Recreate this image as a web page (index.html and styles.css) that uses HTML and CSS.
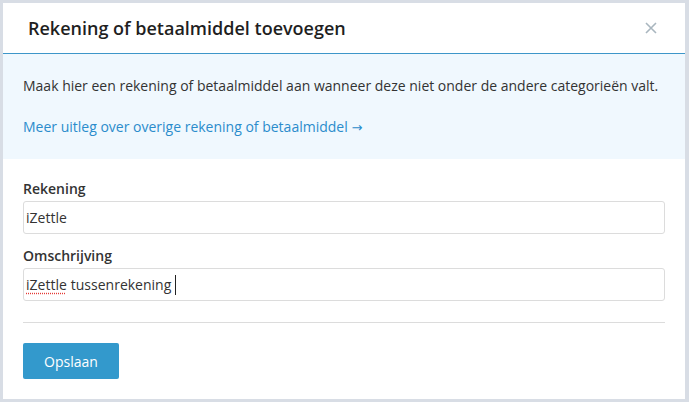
FILE: index.html
```html
<!DOCTYPE html>
<html>
<head>
<meta charset="utf-8">
<link rel="stylesheet" href="styles.css">
</head>
<body>
<div class="dialog">
  <div class="header">
    <h1 class="title">Rekening of betaalmiddel toevoegen</h1>
    <span class="close">
      <svg width="12" height="12" viewBox="0 0 12 12"><path d="M1 1L11 11M11 1L1 11" stroke="#a9b6bf" stroke-width="1.6" fill="none"/></svg>
    </span>
  </div>
  <div class="info">
    <p class="info-text">Maak hier een rekening of betaalmiddel aan wanneer deze niet onder de andere categorieën valt.</p>
    <a class="info-link">Meer uitleg over overige rekening of betaalmiddel <span class="arrow">→</span></a>
  </div>
  <div class="form">
    <label class="label">Rekening</label>
    <div class="input">iZettle</div>
    <label class="label">Omschrijving</label>
    <div class="input"><span class="spell">iZettle</span> tussenrekening<span class="caret"></span></div>
    <hr class="rule">
    <button class="btn">Opslaan</button>
  </div>
</div>
</body>
</html>
```
FILE: styles.css
```css
html, body {
  margin: 0;
  padding: 0;
  background: #d8dde5;
  font-family: "Open Sans", "Noto Sans", sans-serif;
}
body {
  padding: 3px 4px 3px 3px;
  height: 402px;
  box-sizing: border-box;
}
.dialog {
  background: #fff;
  height: 396px;
  display: flex;
  flex-direction: column;
}
.header {
  height: 50px;
  border-bottom: 1px solid #3d96c9;
  display: flex;
  align-items: center;
  justify-content: space-between;
  padding: 0 28px 0 25px;
}
.title {
  margin: 0;
  font-size: 18px;
  font-weight: 600;
  color: #1f1f1f;
  letter-spacing: 0;
}
.close {
  display: flex;
  align-items: center;
}
.info {
  background: #f0f8fe;
  padding: 21px 20px 0;
  height: 84px;
}
.info-text {
  margin: 0;
  font-size: 14px;
  color: #333;
  line-height: 22px;
}
.info-link {
  display: block;
  margin-top: 19px;
  font-size: 14px;
  line-height: 22px;
  color: #2b8ccc;
}
.arrow {
  font-family: "DejaVu Sans", sans-serif;
  font-size: 13px;
}
.form {
  padding: 20px 20px 0;
  display: flex;
  flex-direction: column;
}
.label {
  font-size: 14px;
  font-weight: 600;
  color: #333;
  line-height: 20px;
  margin-bottom: 2px;
}
.input {
  height: 31px;
  border: 1px solid #dcdcdc;
  border-radius: 3px;
  font-size: 14px;
  color: #333;
  line-height: 31px;
  padding: 0 2px;
  margin-bottom: 12px;
  display: flex;
  align-items: center;
}
.spell {
  text-decoration: underline dotted #e53935;
  text-underline-offset: 3px;
  margin-right: 4px;
}
.caret {
  display: inline-block;
  width: 1px;
  height: 20px;
  background: #222;
  margin-left: 4px;
}
.rule {
  border: 0;
  border-top: 1px solid #dcdcdc;
  margin: 9px 0 20px;
}
.btn {
  align-self: flex-start;
  width: 96px;
  height: 36px;
  background: #3399cc;
  color: #fff;
  border: 0;
  border-radius: 2px;
  font-family: "Open Sans", sans-serif;
  font-size: 14px;
}
```
